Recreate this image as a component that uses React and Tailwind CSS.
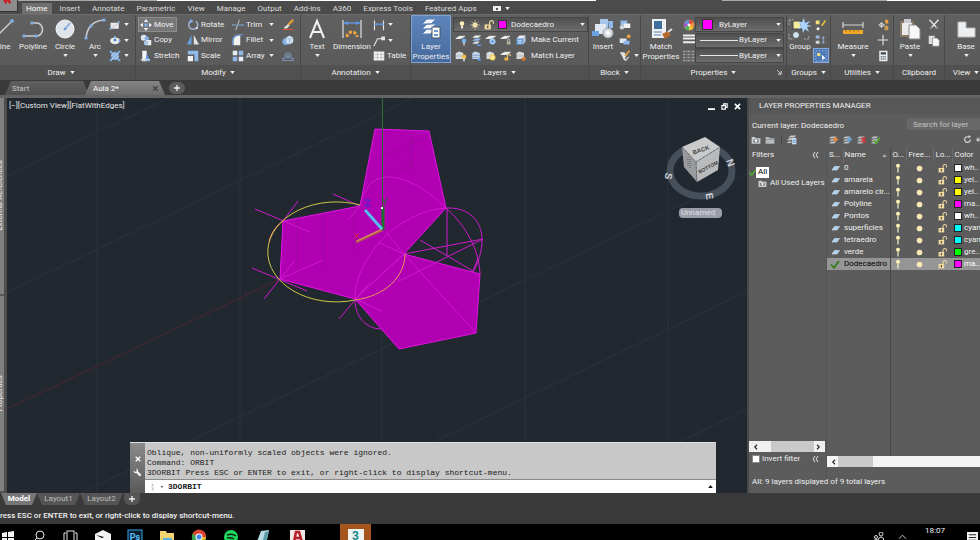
/**
 * App.jsx
 *
 * CAD workspace: ribbon, drawing tabs, 3D viewport with command line,
 * layer manager panel, layout tabs and the desktop taskbar.
 */

// Small icons use a 16x16 box, big ribbon icons a 24x24 box
const small = {
  rect: <><rect x="2" y="5" width="11" height="8" fill="#e8eaec" /><path d="M2 13L13 5" stroke="#b9c3cf" /><circle cx="13" cy="4" r="1.5" fill="#7fb2ea" /><circle cx="2" cy="13" r="1.5" fill="#7fb2ea" /></>,
  ellipse: <><ellipse cx="8" cy="9" rx="6.500" ry="4.500" fill="#e8eaec" /><circle cx="8" cy="8" r="1.800" fill="#3f78c0" /><circle cx="8" cy="4" r="1.500" fill="#7fb2ea" /><circle cx="14" cy="9" r="1.500" fill="#7fb2ea" /></>,
  hatch: <><rect x="3" y="3" width="10" height="10" fill="#86b1e4" /><path d="M3 8L8 3M3 13L13 3M8 13L13 8" stroke="#dbe9f8" /><path d="M1 1h3v3H1zM12 1h3v3h-3zM1 12h3v3H1zM12 12h3v3h-3z" fill="#7ba9df" /></>,
  move: <><path d="M8 0l3 4H5zM8 16l3-4H5zM0 8l4-3v6zM16 8l-4-3v6z" fill="#eef1f4" /><rect x="6" y="6" width="4" height="4" fill="#7fb2ea" /></>,
  copy: <><circle cx="5" cy="5" r="4" fill="#dfe6ee" /><circle cx="9" cy="6" r="3" fill="#86b1e4" /><path d="M8 8h7v7H8z" fill="#e8eaec" /><circle cx="8" cy="12" r="3" fill="#a9c8ea" /></>,
  stretch: <><path d="M3 1h6v14H3z" fill="#f2f4f6" /><path d="M9 5l5 10H7z" fill="#5d9be4" /><path d="M1 13h12" stroke="#cfd8e2" strokeWidth="2" /></>,
  rotate: <><path d="M12 3A6 6 0 1 1 4 3.500" fill="none" stroke="#9fb4cc" strokeWidth="2" /><path d="M4 0l5 3-5 3z" fill="#7fb2ea" /><circle cx="13" cy="12" r="1.500" fill="#dfe6ee" /></>,
  mirror: <><path d="M6 1v13H0z" fill="#6aa3e4" /><path d="M9 1v13h7z" fill="#dfe2e6" /></>,
  scale: <><path d="M1 1h14v14h-5V6H1z" fill="#8fb9ea" /><rect x="1" y="8" width="7" height="7" fill="#f0f2f4" /></>,
  trim: <><path d="M0 8h6M9 8h7" stroke="#7fb2ea" strokeWidth="1.500" /><path d="M10 1L5 15" stroke="#a8b4c2" strokeWidth="1.500" /></>,
  fillet: <><path d="M2 15V9a7 7 0 0 1 7-7h2v13z" fill="#f0f2f4" /><path d="M1 15V9a8 8 0 0 1 8-8h6" fill="none" stroke="#6aa3e4" strokeWidth="1.500" /></>,
  array: <><path d="M1 1h6v6H1zM9 9h6v6H9z" fill="#e8eef6" /><path d="M9 1h6v6H9zM1 9h6v6H1z" fill="#8fb9ea" /></>,
  erase: <><path d="M15 1L8 8" stroke="#e9a13b" strokeWidth="3" /><path d="M8 7l2 2-4 4-4-1z" fill="#e6e6e6" /><path d="M1 14h14" stroke="#d8542c" strokeWidth="1.500" /></>,
  explode: <><circle cx="5" cy="10" r="4.500" fill="#86b1e4" /><path d="M5 5l5-3 5 3v6l-5 3-4-2z" fill="#cfe0f2" /><path d="M5 5l5 2 5-2M10 7v7" stroke="#8fb0d6" fill="none" /></>,
  offset: <><path d="M1 14h14v-3h-3V8a4 4 0 0 0-8 0v3H1z" fill="none" stroke="#7c93b5" strokeWidth="1.500" /><path d="M6 11V8a2 2 0 0 1 4 0v3z" fill="#7c93b5" /></>,
  linear: <><path d="M2 2v13M14 2v13" stroke="#e6e6e6" strokeWidth="1.500" /><path d="M2 7h12" stroke="#5c97e6" strokeWidth="1.500" /><path d="M2 7l4-2v4zM14 7l-4-2v4z" fill="#5c97e6" /></>,
  leader: <><path d="M1 15L6 5h6" fill="none" stroke="#e6e6e6" strokeWidth="1.500" /><rect x="11" y="2" width="5" height="5" fill="#e6e6e6" /></>,
  table: <><rect x="1" y="2" width="14" height="12" fill="#f2f2f2" /><path d="M1 6h14M1 10h14M6 2v12M11 2v12" stroke="#a9b0b8" strokeWidth="0.800" /></>,
  layOff: <><path d="M1 6l5-3h7l-5 3z" fill="#f2f4f6" stroke="#f2f4f6" /><circle cx="12" cy="9" r="3" fill="#79aef0" /><path d="M12 11v4" stroke="#cfd8e2" strokeWidth="2" /></>,
  layIso: <><path d="M3 5l4-3h8l-4 3z" fill="#f2f4f6" /><path d="M3 9l4-3h8l-4 3z" fill="#8fb9ea" /><path d="M3 13l4-3h6l-3 3z" fill="#dfe6ee" /><path d="M9 15h6" stroke="#5c97e6" strokeWidth="2" /></>,
  layFreeze: <><path d="M1 6l5-3h8l-5 3z" fill="#f2f4f6" stroke="#f2f4f6" /><circle cx="10" cy="10" r="4" fill="#a7cdf5" /><path d="M10 8v4M8 10h4" stroke="#4d86cf" /></>,
  layLock: <><path d="M1 6l5-3h7l-5 3z" fill="#f2f4f6" stroke="#f2f4f6" /><rect x="9" y="10" width="5" height="4" fill="#a9b59a" /><path d="M10 10V8a1.500 1.500 0 0 1 3 0v2" fill="none" stroke="#d8d8d8" /></>,
  layMake: <><path d="M2 6h9v8H2z" fill="#6aa3e4" /><path d="M2 6l4-4h8l-3 4z" fill="#e8eef6" /><path d="M11 6l3-4v8l-3 4z" fill="#b9cbe0" /><path d="M4 9h5M4 12h5" stroke="#fff" /></>,
  layOn: <><path d="M1 4l5-2 5 2v8H1z" fill="#d8dbdf" /><path d="M1 8h9" stroke="#a2a9b1" /><circle cx="12" cy="9" r="3" fill="#f4c24a" /><path d="M12 11v4" stroke="#eee" strokeWidth="2" /></>,
  layUniso: <><path d="M3 4l4-2 6 2v8H3z" fill="#c5d6ea" /><path d="M3 7h10M3 10h8" stroke="#7794b8" /><path d="M9 13l5 2v-5z" fill="#5c97e6" /></>,
  layThaw: <><path d="M2 4l4-2 6 2v8H2z" fill="#d8dbdf" /><circle cx="10" cy="10" r="4" fill="#f6cf5e" /><circle cx="10" cy="10" r="2" fill="#fff3bd" /></>,
  layUnlock: <><path d="M1 6l5-3h8l-5 3z" fill="#f2f4f6" stroke="#f2f4f6" /><rect x="6" y="10" width="5" height="4" fill="#f0b63c" /><path d="M10 10V8a2 2 0 0 1 4 0" fill="none" stroke="#f0d27c" strokeWidth="1.500" /></>,
  layMatch: <><path d="M2 4l4-2 6 2v8H2z" fill="#d8dbdf" /><path d="M2 8h9" stroke="#a2a9b1" /><path d="M8 11l5-2 2 3-4 3z" fill="#d67b2f" /></>,
  blkEdit: <><path d="M2 2h9v6H2z" fill="#8fb9ea" /><path d="M6 6h9v6H6z" fill="#f0f2f4" /><circle cx="4" cy="11" r="3" fill="#cfd6de" /></>,
  blkNew: <><path d="M1 6h9v6H1z" fill="#e3e9f0" /><path d="M6 9h8v5H6z" fill="#8fb9ea" /><circle cx="13" cy="3" r="2.500" fill="#f3a13c" /></>,
  blkAttr: <><path d="M1 3h6l3 4-3 7-3-6z" fill="#dfe2e6" /><path d="M14 1L8 8" stroke="#e9a13b" strokeWidth="2.500" /><path d="M6 11l3 3 4-5" stroke="#e6e6e6" fill="none" strokeWidth="1.500" /></>,
  wheel: <><circle cx="8" cy="8" r="7" fill="#e8c93a" /><path d="M8 8V1a7 7 0 0 0-6 3.500z" fill="#5a8ee8" /><path d="M8 8L2 4.500A7 7 0 0 0 2 11.500z" fill="#a056c8" /><path d="M8 8l-6 3.500A7 7 0 0 0 8 15z" fill="#45b567" /><path d="M8 8v7a7 7 0 0 0 6-3.500z" fill="#e8c93a" /><path d="M8 8V1a7 7 0 0 1 6 3.500z" fill="#e24646" /><path d="M8 8l6-3.500a7 7 0 0 1 0 7z" fill="#f09038" /><circle cx="8" cy="8" r="2" fill="#f3f3f3" /></>,
  weight: <path d="M0 2h16M0 6h16M0 11h16" stroke="#eeeeee" strokeWidth="2.500" />,
  ltype: <path d="M0 2h16M0 6h16M0 10h16M0 14h16" stroke="#a5a5a5" strokeWidth="2" strokeDasharray="3 1 1 1" />,
  ungroup: <><rect x="1" y="2" width="5" height="5" fill="#f3e27a" /><circle cx="4" cy="13" r="2" fill="#f2f2f2" /><path d="M14 2L9 9" stroke="#e9c53b" strokeWidth="2" /></>,
  groupEdit: <><rect x="1" y="2" width="5" height="4" fill="#9fbce0" /><rect x="1" y="9" width="5" height="4" fill="#cfd6de" /><path d="M11 3v10M9 5h4M9 11h4" stroke="#9fc0ea" /></>,
  groupSel: <><path d="M1 1h14v14H1z" fill="none" stroke="#a9c4e8" strokeDasharray="2 2" /><rect x="3" y="4" width="4" height="4" fill="#f3e27a" /><path d="M9 6l5 5-3 1-1 3z" fill="#fff" /></>,
  quickCalc: <><path d="M2 8h9M6 4v8" stroke="#e6e6e6" /><circle cx="6" cy="8" r="2.500" fill="none" stroke="#e6e6e6" /><rect x="11" y="1" width="4" height="5" fill="#f3a13c" /><rect x="10" y="9" width="5" height="6" fill="#c99a52" /></>,
  point: <path d="M8 1v14M1 8h14" stroke="#e6e6e6" strokeWidth="1.500" />,
  calc: <><rect x="3" y="1" width="11" height="14" fill="#eceff2" /><rect x="5" y="3" width="7" height="3" fill="#3f4a58" /><path d="M5 9h7M5 12h7" stroke="#5a6470" strokeWidth="2" strokeDasharray="1.500 1" /></>,
  cut: <><path d="M2 1l9 10M14 1L5 11" stroke="#e6e6e6" strokeWidth="1.800" /><circle cx="4" cy="12" r="1.800" fill="#888" /><circle cx="12" cy="12" r="1.800" fill="#888" /></>,
  copyClip: <><path d="M1 1h8v11H1z" fill="#dcdfe2" /><path d="M6 4h6l3 3v8H6z" fill="#f6f6f6" stroke="#777" strokeWidth="0.800" /></>,
  bulb: <><circle cx="8" cy="5" r="4.500" fill="#fdf3b4" /><path d="M6 9h4v6H6z" fill="#f1eecb" /></>,
  pin: <><circle cx="8" cy="4.500" r="3.200" fill="#fdf3b4" /><path d="M7 7h2v8H7z" fill="#f1eecb" /></>,
  sun: <><circle cx="8" cy="8" r="4" fill="#fbeab5" /><path d="M8 0v16M0 8h16M2.500 2.500l11 11M13.500 2.500l-11 11" stroke="#e8d9a8" strokeWidth="0.900" /></>,
  lock: <><rect x="1" y="7" width="10" height="8" fill="#f1d9a0" /><rect x="5" y="9" width="2" height="4" fill="#4a4a4a" /><path d="M9 7V4a3 3 0 0 1 6 0v2" fill="none" stroke="#f1d9a0" strokeWidth="1.800" /></>,
  sheet: <path d="M1 12l5-7h10l-5 7z" fill="#a9d0f5" stroke="#e8f3ff" />,
  check: <path d="M1 8l5 6L15 2" fill="none" stroke="#4fae28" strokeWidth="3" />,
  checkDark: <path d="M1 8l5 6L15 2" fill="none" stroke="#2f7d14" strokeWidth="3" />,
  folderPlus: <><path d="M1 3h5l2 2h7v9H1z" fill="#c9ccd0" /><path d="M4 7h8v5H4z" fill="#6d7176" /><path d="M8 6l1 2h2l-2 2 1 2-2-1-2 1 1-2-2-2h2z" fill="#fff" /></>,
  folder: <><path d="M1 3h5l2 2h7v9H1z" fill="#b7babd" /><path d="M1 7h14" stroke="#808387" /></>,
  states: <><path d="M1 9l4-3h6l-3 3zM3 5l4-3h8l-3 3zM1 13l3-2h4v2z" fill="#c9ccd0" /><rect x="9" y="6" width="6" height="9" fill="#dcebfb" /><path d="M10 9h4M10 12h4" stroke="#3a80d0" strokeWidth="1.500" /></>,
  stack: <path d="M1 6l4-4h9l-4 4zM1 10l4-4h9l-4 4zM1 14l4-4h9l-4 4z" fill="#c2c6ca" stroke="#565656" strokeWidth="0.800" />,
  refresh: <><path d="M13 8A5 5 0 1 1 8 3h3" fill="none" stroke="#d8d8d8" strokeWidth="2" /><path d="M10 0l4 3-4 3z" fill="#d8d8d8" /></>,
  grip: <path d="M2 2h12M2 7h12M2 12h12" stroke="#aaa" strokeWidth="1.500" strokeDasharray="1.500 1.500" />,
  wrench: <path d="M1 5a4 4 0 0 0 5 4l6 6 3-3-6-6A4 4 0 0 0 5 1l2 3-2 3z" fill="#f2f2f2" />,
  prompt: <><circle cx="8" cy="3" r="2.500" fill="#c4c4c4" /><path d="M5 6h6M5 9h6M7 11h3v4H7z" stroke="#c4c4c4" fill="#c4c4c4" /></>,
};

const big = {
  line: <><path d="M4 21L21 4" stroke="#c9ced4" strokeWidth="1.500" /><circle cx="21" cy="4" r="2" fill="#7fa9dd" /><circle cx="4" cy="21" r="2" fill="#7fa9dd" /></>,
  polyline: <><path d="M11 6h5a5.500 6.500 0 0 1 0 13H3" fill="none" stroke="#c9ced4" strokeWidth="1.600" /><circle cx="11" cy="6" r="1.800" fill="#7fa9dd" /><circle cx="3" cy="19" r="1.800" fill="#7fa9dd" /><circle cx="15" cy="19" r="1.800" fill="#7fa9dd" /></>,
  circle: <><circle cx="12" cy="12" r="9" fill="#dfe4ea" stroke="#f6f8fa" /><path d="M12 12l5-6" stroke="#7fa9dd" strokeWidth="1.500" /><circle cx="12" cy="12" r="1.300" fill="#6d9bd8" /></>,
  arc: <><path d="M3 21C4 10 10 4 21 3" fill="none" stroke="#c9ced4" strokeWidth="1.600" /><circle cx="3" cy="21" r="1.800" fill="#7fa9dd" /><circle cx="8" cy="9" r="1.800" fill="#7fa9dd" /><circle cx="21" cy="3" r="1.800" fill="#7fa9dd" /></>,
  text: <path d="M5 21L12 4l7 17M8 15h8" fill="none" stroke="#f2f2f2" strokeWidth="2" />,
  dimension: <><path d="M3 3v18M21 3v18" stroke="#c9ced4" strokeWidth="1.400" /><path d="M4 6h16" stroke="#5c97e6" strokeWidth="1.400" /><path d="M4 6l4-2v4zM20 6l-4-2v4z" fill="#5c97e6" /><path d="M7 20a5 5 0 0 1 10 0" fill="none" stroke="#f0a540" strokeWidth="3" strokeDasharray="3 1.500" /></>,
  layers: <><path d="M3 7l5-5h9l-5 5zM3 12l5-5h9l-5 5zM3 17l5-5h7l-3 5z" fill="#f4f6f8" stroke="#5a7fb4" strokeWidth="1" /><rect x="13" y="10" width="8" height="11" fill="#f8f8f8" stroke="#44556c" /><path d="M15 14h4M15 18h4" stroke="#3d78c4" strokeWidth="1.500" /></>,
  insert: <><path d="M9 2h8v9H9z" fill="#a6c6ea" /><path d="M4 7h11v10H4z" fill="#dfe7f0" /><path d="M1 14h7v5H1z" fill="#6aa3e4" /><path d="M17 4h5v7h-4z" fill="#8fb9ea" /><circle cx="17" cy="16" r="5" fill="#d9dde2" stroke="#9aa3ad" /><circle cx="17" cy="16" r="2" fill="#fff" /></>,
  match: <><path d="M3 2h14v19H3z" fill="#eef1f4" /><rect x="5" y="4" width="8" height="8" fill="#3f6f9f" /><path d="M5 15h8M5 18h7" stroke="#8fa7c0" strokeWidth="1.500" /><path d="M13 17l6-3 3 4-6 4z" fill="#b76a2c" /><path d="M19 15l4-3" stroke="#ddd" strokeWidth="2" /></>,
  group: <><path d="M1 3h5M1 3v5M1 17v5h5M16 22h5v-4" fill="none" stroke="#a7acb2" strokeDasharray="2 1" /><rect x="5" y="4" width="8" height="8" fill="#f3ef9a" stroke="#444" /><circle cx="8" cy="18" r="3.500" fill="#cfe4f0" stroke="#555" /><path d="M16 1l1 5 5-2-3 4 5 1-5 1 2 5-4-3-2 4-1-5-4 1 3-4-3-3 4 0z" fill="#a9d6ff" /></>,
  measure: <><path d="M2 5v6M22 5v6M2 8h20" stroke="#d6d6d6" strokeWidth="1.200" /><rect x="2" y="13" width="20" height="4" fill="#f0a828" /><path d="M5 13v2M9 13v2M13 13v2M17 13v2" stroke="#a77410" /></>,
  paste: <><rect x="2" y="4" width="14" height="16" rx="1" fill="#8a7a68" /><rect x="4" y="6" width="10" height="12" fill="#ececec" /><rect x="6" y="2" width="7" height="4" fill="#c8ccd0" /><path d="M11 8h7l4 4v10H11z" fill="#f8f8f8" stroke="#8a8a8a" /></>,
  base: <path d="M4 5h8v6h9v9H4z" fill="#eceef0" stroke="#b9bcc0" />,
};

const Icon = ({ name, className = "w-3 h-3" }) => (
  <svg viewBox={big[name] ? "0 0 24 24" : "0 0 16 16"} className={`${className} shrink-0`} aria-hidden="true">
    {big[name] || small[name]}
  </svg>
);

const Caret = ({ className = "" }) => (
  <svg viewBox="0 0 6 4" className={`w-[5px] h-[3px] shrink-0 ${className}`} aria-hidden="true">
    <path d="M0 0h6L3 4z" fill="#f2f2f2" />
  </svg>
);

// One ribbon group: tools on top, title strip below
const Panel = ({ title, caret = true, className, corner, children }) => (
  <section className={`flex flex-col shrink-0 border-r border-[#484848] ${className}`}>
    <div className="flex h-[50px]">{children}</div>
    <div className="flex items-center justify-center gap-1 h-[15px] bg-[#515151] relative">
      <span>{title}</span>
      {caret && <Caret />}
      {corner && (
        <svg viewBox="0 0 6 6" className="absolute right-1 w-[5px] h-[5px]"><path d="M0 0l5 5M5 1v4H1" stroke="#e6e6e6" fill="none" /></svg>
      )}
    </div>
  </section>
);

const BigButton = ({ icon, lines, caret, className }) => (
  <button className={`flex flex-col items-center shrink-0 whitespace-nowrap pt-[2px] ${className}`}>
    <Icon name={icon} className="w-6 h-6" />
    <span className="mt-px">{lines[0]}</span>
    {lines[1] && <span>{lines[1]}</span>}
    {caret && <Caret className="mt-[2px]" />}
  </button>
);

const Tool = ({ icon, label, caret, active }) => (
  <button
    aria-label={label || icon}
    className={`flex items-center gap-[2px] h-[15px] px-[2px] whitespace-nowrap ${active ? "bg-[#777777] outline outline-[#8d8d8d] -outline-offset-1" : ""}`}
  >
    <Icon name={icon} />
    {label && <span>{label}</span>}
    {caret && <Caret className="ml-auto" />}
  </button>
);

const Tools = ({ items, className }) => (
  <div className={`flex flex-col justify-between shrink-0 py-[2px] ${className}`}>
    {items.map(item => <Tool key={item.icon} {...item} />)}
  </div>
);

const LAYER_TOOLS = [
  { label: "Make Current", icons: ["layOff", "layIso", "layFreeze", "layLock", "layMake"] },
  { label: "Match Layer", icons: ["layOn", "layUniso", "layThaw", "layUnlock", "layMatch"] },
];

const Ribbon = () => (
  <div className="flex bg-linear-to-b from-[#606060] to-[#595959] border-t border-[#6b6b6b] overflow-hidden">
    <Panel title="Draw" className="w-[149px] -ml-[13px]">
      <BigButton icon="line" lines={["Line"]} className="w-8" />
      <BigButton icon="polyline" lines={["Polyline"]} className="w-7" />
      <BigButton icon="circle" lines={["Circle"]} caret className="w-9" />
      <BigButton icon="arc" lines={["Arc"]} caret className="w-6" />
      <Tools className="w-6" items={[
        { icon: "rect", caret: true }, { icon: "ellipse", caret: true }, { icon: "hatch", caret: true },
      ]} />
    </Panel>

    <Panel title="Modify" className="w-[165px]">
      <Tools className="w-[39px] ml-[2px] mr-2" items={[
        { icon: "move", label: "Move", active: true }, { icon: "copy", label: "Copy" }, { icon: "stretch", label: "Stretch" },
      ]} />
      <Tools className="w-[45px]" items={[
        { icon: "rotate", label: "Rotate" }, { icon: "mirror", label: "Mirror" }, { icon: "scale", label: "Scale" },
      ]} />
      <Tools className="w-[46px] mr-1" items={[
        { icon: "trim", label: "Trim", caret: true }, { icon: "fillet", label: "Fillet", caret: true }, { icon: "array", label: "Array", caret: true },
      ]} />
      <Tools className="w-4" items={[{ icon: "erase" }, { icon: "explode" }, { icon: "offset" }]} />
    </Panel>

    <Panel title="Annotation" className="w-[110px]">
      <BigButton icon="text" lines={["Text"]} caret className="w-8" />
      <BigButton icon="dimension" lines={["Dimension"]} className="w-[38px]" />
      <div className="flex flex-col justify-between py-[2px]">
        <div className="flex flex-col w-6 gap-px"><Tool icon="linear" caret /><Tool icon="leader" caret /></div>
        <Tool icon="table" label="Table" />
      </div>
    </Panel>

    <Panel title="Layers" className="w-[178px]">
      <BigButton icon="layers" lines={["Layer", "Properties"]} className="w-10 mr-[2px] mb-[2px] bg-linear-to-b from-[#5e86bd] to-[#46699c] outline outline-[#7fa3d3] -outline-offset-1" />
      <div className="flex flex-col justify-between w-[135px] py-[2px]">
        <label className="flex items-center gap-1 h-[15px] pl-1 pr-[2px] bg-linear-to-b from-[#505050] to-[#6c6c6c] border border-[#464646]">
          <Icon name="bulb" className="w-2 h-[10px]" />
          <Icon name="sun" className="w-[10px] h-[10px]" />
          <Icon name="lock" className="w-[10px] h-[10px]" />
          <span className="w-[9px] h-[9px] bg-[#ff00ff] border border-[#333]" />
          <select aria-label="Current layer" className="appearance-none flex-1 outline-none">
            <option>Dodecaedro</option>
          </select>
          <Caret />
        </label>
        {LAYER_TOOLS.map(row => (
          <div key={row.label} className="flex items-center h-[15px]">
            {row.icons.map(icon => (
              <button key={icon} aria-label={icon} className="flex justify-center w-[15px]"><Icon name={icon} /></button>
            ))}
            <button className="pl-[3px] whitespace-nowrap">{row.label}</button>
          </div>
        ))}
      </div>
    </Panel>

    <Panel title="Block" className="w-[52px]">
      <BigButton icon="insert" lines={["Insert"]} className="w-7" />
      <Tools className="w-6" items={[{ icon: "blkEdit" }, { icon: "blkNew" }, { icon: "blkAttr", caret: true }]} />
    </Panel>

    <Panel title="Properties" corner className="w-[146px]">
      <BigButton icon="match" lines={["Match", "Properties"]} className="w-[40px]" />
      <Tools className="w-[14px]" items={[{ icon: "wheel" }, { icon: "weight" }, { icon: "ltype" }]} />
      <div className="flex flex-col justify-between w-[89px] py-[2px]">
        {["color", "lineweight", "linetype"].map(kind => (
          <label key={kind} className="flex items-center h-[15px] px-[2px] gap-1 bg-linear-to-b from-[#505050] to-[#6c6c6c] border border-[#464646]">
            {kind === "color"
              ? <span className="w-[11px] h-[11px] ml-1 mr-[2px] bg-[#ff00ff] border border-[#333]" />
              : <span className="w-[38px] h-px ml-[2px] -mr-[3px] bg-[#e6e6e6]" />}
            <select aria-label={kind} className="appearance-none flex-1 min-w-0 outline-none">
              <option>ByLayer</option>
            </select>
            <Caret />
          </label>
        ))}
      </div>
    </Panel>

    <Panel title="Groups" className="w-[44px]">
      <BigButton icon="group" lines={["Group"]} className="w-[26px]" />
      <div className="flex flex-col justify-between py-[2px]">
        <Tool icon="ungroup" />
        <Tool icon="groupEdit" />
        <div className="bg-[#4f79b5] outline outline-[#85a9dc] -outline-offset-1"><Tool icon="groupSel" /></div>
      </div>
    </Panel>

    <Panel title="Utilities" className="w-[63px]">
      <BigButton icon="measure" lines={["Measure"]} caret className="w-11" />
      <Tools className="w-4" items={[{ icon: "quickCalc" }, { icon: "point" }, { icon: "calc" }]} />
    </Panel>

    <Panel title="Clipboard" caret={false} className="w-[51px]">
      <BigButton icon="paste" lines={["Paste"]} caret className="w-8" />
      <div className="flex flex-col gap-px py-[2px]"><Tool icon="cut" /><Tool icon="copyClip" /></div>
    </Panel>

    <Panel title="View" className="flex-1">
      <BigButton icon="base" lines={["Base"]} caret className="w-[42px]" />
    </Panel>
  </div>
);

const MENU = ["Home", "Insert", "Annotate", "Parametric", "View", "Manage", "Output", "Add-ins", "A360", "Express Tools", "Featured Apps"];

const Header = () => (
  <header>
    <div className="flex bg-[#4b4b4b]">
      <button aria-label="Application menu" className="w-[18px] h-[12px] bg-[#8c8c8c] border-r border-b border-[#333] overflow-hidden">
        <svg viewBox="0 0 18 12" className="w-full h-full"><path d="M3 0l3 5 2-4 2 4 2-3-2-2z" fill="#c9232b" /></svg>
      </button>
      <div className="flex-1 flex flex-col">
        <div className="flex h-px">
          <div className="w-[139px] bg-[#a9a9a9]" />
          <div className="w-[439px] bg-white" />
          <div className="w-[126px] bg-[#4b4b4b]" />
          <div className="w-[165px] bg-[#a9a9a9]" />
          <div className="flex-1 bg-white" />
        </div>
        <nav className="flex items-end h-[13px] pl-1">
          {MENU.map(tab => (
            <button
              key={tab}
              className={tab === "Home" ? "px-1 mr-[2px] h-[11px] bg-[#707070] text-white" : "px-[6px] h-[11px] text-[#dcdcdc]"}
            >
              {tab}
            </button>
          ))}
          <button aria-label="Ribbon display" className="flex items-center gap-1 h-[11px] ml-[10px]">
            <span className="flex items-center justify-center w-2 h-[5px] bg-[#eee]"><span className="w-[2px] h-[2px] bg-[#555]" /></span>
            <Caret />
          </button>
        </nav>
      </div>
    </div>
    <Ribbon />
    <div className="flex items-end h-[15px] pl-[5px] bg-[#3a3a3a]">
      <button className="w-[84px] h-[14px] pt-px pl-[7px] text-left text-[#c8c8c8] bg-linear-to-b from-[#606060] to-[#505050] [clip-path:polygon(6px_0,calc(100%-6px)_0,100%_100%,0_100%)]">Start</button>
      <button className="flex items-center justify-between w-[80px] h-[14px] -ml-1 pt-px pl-2 pr-[7px] text-white bg-linear-to-b from-[#858585] to-[#6b6b6b] [clip-path:polygon(6px_0,calc(100%-6px)_0,100%_100%,0_100%)]">
        Aula 2*
        <svg viewBox="0 0 6 6" className="w-[5px] h-[5px]"><path d="M0 0l6 6M6 0L0 6" stroke="#444" strokeWidth="1.500" /></svg>
      </button>
      <button aria-label="New drawing" className="flex items-center justify-center w-4 h-3 ml-1 mb-px rounded-md bg-[#5c5c5c]">
        <svg viewBox="0 0 6 6" className="w-[6px] h-[6px]"><path d="M3 0v6M0 3h6" stroke="#eee" strokeWidth="1.300" /></svg>
      </button>
    </div>
    <div className="h-[3px] bg-[#646464]" />
  </header>
);

// Grid lines of the drawing plane; the X axis is drawn apart in red
const PLANE_LINES = [-290, -172, -54, 64, 181, 417, 535, 653, 771];
const MAJOR_X = [97, 240, 382, 525, 668];
const MINOR_X = [11, 39, 68, 125, 154, 182, 211, 268, 297, 325, 354, 411, 439, 468, 497, 554, 582, 611, 639, 697, 725];

const Model = () => (
  <svg viewBox="7 98 740 395" preserveAspectRatio="xMidYMid slice" className="absolute inset-0 w-full h-full">
    <g stroke="#242b33">
      {MINOR_X.map(x => <path key={x} d={`M${x} 98V493`} />)}
    </g>
    <g stroke="#2b333d">
      {MAJOR_X.map(x => <path key={x} d={`M${x} 98V493`} />)}
      {PLANE_LINES.map(y => <path key={y} d={`M0 ${y + 115}L750 ${y - 245}`} />)}
    </g>
    <path d="M7 409L280 279" stroke="#4d2630" />

    {/* Three pentagon faces */}
    <g fill="#b000b2" stroke="#e312e3">
      <path d="M375 129L429 131L446 208L404 254L360 206Z" />
      <path d="M360 206L283 221L280 279L355 299L404 254Z" stroke="none" />
      <path d="M360 206L283 221L280 279L355 299" />
      <path d="M404 254L480 274L476 333L399 349L355 299Z" />
    </g>
    <path d="M360 206L404 254" stroke="#b000b2" strokeWidth="2" />
    <g stroke="#92108f" strokeWidth="0.600">
      <path d="M411 131v40M297 220v50M323 214v54M354 208v42M375 160l54-24M370 185l43-20" />
    </g>
    <g fill="none" stroke="#cf18cf">
      <path d="M360 206C364 188 372 178 387 177C410 177 430 193 446 208" />
      <path d="M355 299C354 275 372 247 390 232C408 217 428 209 446 208C468 207 482 220 482 240C482 252 478 264 473 272" />
      <path d="M446 208C462 222 479 246 480 274M355 299C355 316 365 329 382 329" />
      <path d="M447 208V255M404 254L483 239L397 282M420 240L473 271L478 258M404 254L476 333M355 299L404 254" />
      <path d="M378 242L404 254L386 232M280 279L323 260M360 206l-12 14" />
      <path d="M255 209L310 232M298 201L283 221M333 194L360 206M252 268L307 291M295 260L264 299M370 282L339 319M355 299L382 311" />
    </g>
    <path d="M360 205A68.500 50 0 1 0 355 300" fill="none" stroke="#c9c64a" />
    <path d="M355 300C385 296 405 277 405 254M269 242C271 233 276 226 283 221" fill="none" stroke="#f09a60" />

    {/* UCS icon */}
    <path d="M382.500 98V207" stroke="#2f6a38" />
    <path d="M382 230L356 242" stroke="#b85a50" strokeWidth="3" />
    <path d="M382 229L357 241" stroke="#d89a6c" />
    <path d="M383 230V207" stroke="#1f7328" strokeWidth="3" />
    <rect x="381" y="207" width="2" height="2" fill="#f0fff0" />
    <path d="M382 229L365 210" stroke="#4db8ec" strokeWidth="3" />
    <path d="M382 229L365 210" stroke="#b9ecff" strokeDasharray="1 2" />
    <path d="M364 200h6l-5 6h6" stroke="#3030d8" fill="none" />
    <path d="M382 198l3 4l3-4M385 202v4" stroke="#2c6a33" fill="none" />
    <path d="M354 233l5 6M359 233l-5 6" stroke="#d02848" fill="none" />

    {/* View cube and compass ring */}
    <ellipse cx="701" cy="171" rx="31" ry="25" fill="none" stroke="#464f5a" strokeWidth="7" />
    <path d="M682 147L705 137L720 147L696 162Z" fill="#c9cacc" />
    <path d="M682 147L696 162L697 182L684 167Z" fill="#9a9b9f" />
    <path d="M696 162L720 147L718 170L697 182Z" fill="#b9babc" />
    <path d="M682 147L696 162L720 147M696 162L697 182" fill="none" stroke="#6c6e72" strokeDasharray="3 1" />
    <path d="M688 157v10M690 159v10" stroke="#5a5c60" strokeDasharray="1 1" />
    <g fontFamily="Liberation Sans, sans-serif" fontWeight="700" textAnchor="middle">
      <text x="701" y="152" fontSize="6" fill="#3c3e42" transform="rotate(-20 701 150)">BACK</text>
      <text x="708" y="169" fontSize="5" fill="#3c3e42" transform="rotate(-28 708 167)">BOTTOM</text>
      <text x="668" y="179" fontSize="10" fill="#cfd2d6" transform="rotate(100 668 176)">S</text>
      <text x="730" y="166" fontSize="10" fill="#cfd2d6" transform="rotate(70 730 163)">N</text>
      <text x="710" y="200" fontSize="10" fill="#cfd2d6" transform="rotate(80 710 196)">E</text>
    </g>
  </svg>
);

const CommandLine = () => (
  <div className="flex h-[51px] ml-[123px] mr-[31px] bg-[#c8c8c8] border-t border-[#e0e0e0]">
    <div className="flex flex-col items-center gap-[6px] w-[15px] pt-px bg-linear-to-b from-[#8a8a8a] to-[#5a5a5a]">
      <Icon name="grip" className="w-3 h-[6px]" />
      <svg viewBox="0 0 8 8" className="w-[6px] h-[6px]"><path d="M1 1l6 6M7 1L1 7" stroke="#fff" strokeWidth="1.800" /></svg>
      <Icon name="wrench" className="w-[9px] h-[9px]" />
    </div>
    <div className="flex-1 flex flex-col text-[#1a1a1a] font-['Liberation_Mono',monospace]">
      <div className="flex-1 pt-[5px] pl-[2px] leading-[10px] whitespace-nowrap overflow-hidden">
        <p>Oblique, non-uniformly scaled objects were ignored.</p>
        <p>Command: ORBIT</p>
        <p>3DORBIT Press ESC or ENTER to exit, or right-click to display shortcut-menu.</p>
      </div>
      <label className="flex items-center gap-1 h-[14px] pl-1 pr-[3px] bg-white border-t border-[#8a8a8a]">
        <Icon name="prompt" className="w-[7px] h-[10px]" />
        <svg viewBox="0 0 6 4" className="w-1 h-[2px]"><path d="M0 0h6L3 4z" fill="#666" /></svg>
        <input aria-label="Command" defaultValue="3DORBIT" className="flex-1 font-bold outline-none" />
        <svg viewBox="0 0 6 4" className="w-[5px] h-[3px]"><path d="M0 4h6L3 0z" fill="#111" /></svg>
      </label>
    </div>
  </div>
);

const Viewport = () => (
  <main className="relative flex-1 flex flex-col bg-[#212830] overflow-hidden">
    <Model />
    <div className="relative flex justify-between pt-[3px] pl-[2px] pr-[6px] text-[#e6e6e6]">
      <span>[−][Custom View][FlatWithEdges]</span>
      <div className="flex items-center gap-[6px]">
        <button aria-label="Minimize"><svg viewBox="0 0 8 8" className="w-[7px] h-[7px]"><path d="M0 7h8" stroke="#fff" strokeWidth="2" /></svg></button>
        <button aria-label="Restore"><svg viewBox="0 0 8 8" className="w-[7px] h-[7px]"><path d="M1 3h4v4H1zM3 3V1h4v4H5" fill="none" stroke="#fff" strokeWidth="1.300" /></svg></button>
        <button aria-label="Close"><svg viewBox="0 0 8 8" className="w-[7px] h-[7px]"><path d="M1 1l6 6M7 1L1 7" stroke="#fff" strokeWidth="1.800" /></svg></button>
      </div>
    </div>
    <button className="absolute right-[25px] top-[110px] w-[43px] h-[10px] px-[2px] rounded-sm bg-[#9b9da9] text-left text-[#dfe0e6]">
      Unnamed
    </button>
    <div className="relative mt-auto"><CommandLine /></div>
  </main>
);

const LAYERS = [
  { name: "0", color: "#ffffff", label: "wh.." },
  { name: "amarela", color: "#ffff00", label: "yel.." },
  { name: "amarelo cir...", color: "#ffff00", label: "yel.." },
  { name: "Polyline", color: "#ff00ff", label: "ma.." },
  { name: "Pontos", color: "#ffffff", label: "wh.." },
  { name: "superficies", color: "#00ffff", label: "cyan" },
  { name: "tetraedro", color: "#00ffff", label: "cyan" },
  { name: "verde", color: "#00ff00", label: "gre.." },
  { name: "Dodecaedro", color: "#ff00ff", label: "ma..", current: true },
];

const LayerTable = () => (
  <table className="w-full table-fixed border-collapse whitespace-nowrap">
    <thead>
      <tr className="h-[14px] bg-[#5b5b5b] text-left">
        <th className="w-4 pl-[2px] font-normal">S...</th>
        <th className="w-[47px] pl-px font-normal border-l border-[#6c6c6c]">
          <span className="flex items-center justify-between pr-[3px]">Name
            <svg viewBox="0 0 6 4" className="w-[5px] h-[3px]"><path d="M0 4h6L3 0z" fill="#aaa" /></svg>
          </span>
        </th>
        <th className="w-4 pl-[2px] font-normal border-l border-[#484848]">O...</th>
        <th className="w-[27px] pl-[2px] font-normal border-l border-[#6c6c6c]">Free...</th>
        <th className="w-[19px] pl-[2px] font-normal border-l border-[#6c6c6c]">Lo...</th>
        <th className="pl-[2px] font-normal border-l border-[#6c6c6c]">Color</th>
      </tr>
    </thead>
    <tbody>
      {LAYERS.map(layer => (
        <tr key={layer.name} className={layer.current ? "h-3 bg-[#959595] text-black" : "h-3"}>
          <td><Icon name={layer.current ? "checkDark" : "sheet"} className={layer.current ? "w-[10px] h-[9px] mx-auto" : "w-[9px] h-[8px] mx-auto"} /></td>
          <td className="pl-px">{layer.name}</td>
          <td className="border-l border-[#484848]"><Icon name="pin" className="w-[10px] h-[10px] mx-auto" /></td>
          <td><svg viewBox="0 0 16 16" className="w-[9px] h-[9px] mx-auto"><circle cx="8" cy="8" r="5" fill="#fce9b8" /></svg></td>
          <td><Icon name="lock" className="w-[9px] h-[9px] mx-auto" /></td>
          <td>
            <span className={layer.current ? "flex items-center gap-[2px] pl-[2px] text-white" : "flex items-center gap-[2px] pl-[2px]"}>
              <span className="w-2 h-2 shrink-0 border border-[#222]" style={{ backgroundColor: layer.color }} />
              {layer.label}
            </span>
          </td>
        </tr>
      ))}
    </tbody>
  </table>
);

const Chevron = ({ flip }) => (
  <svg viewBox="0 0 6 8" className="w-[5px] h-[6px] shrink-0"><path d={flip ? "M1 1l3 3-3 3" : "M5 1L2 4l3 3"} fill="none" stroke="#222" strokeWidth="1.500" /></svg>
);

const DoubleChevron = () => (
  <svg viewBox="0 0 7 6" className="w-[7px] h-[6px] mr-[2px] shrink-0"><path d="M3 0L1 3l2 3M6 0L4 3l2 3" fill="none" stroke="#e6e6e6" /></svg>
);

const LayerManager = () => (
  <aside className="flex flex-col shrink-0 w-[233px] bg-[#5c5c5c] border-l-2 border-[#4a4a4a] overflow-hidden">
    <h2 className="pl-[10px] py-[3px] bg-[#575757] whitespace-nowrap">LAYER PROPERTIES MANAGER</h2>
    <div className="flex justify-between pt-[6px] pl-[3px] whitespace-nowrap">
      <span className="pt-px">Current layer: Dodecaedro</span>
      <input aria-label="Search for layer" placeholder="Search for layer" className="w-[73px] h-3 -mt-[2px] pl-[6px] bg-[#686868] placeholder:text-[#c4c4c4] outline-none" />
    </div>
    <div className="flex items-center gap-1 h-[17px] pl-[2px]">
      <Icon name="folderPlus" className="w-[10px] h-[10px]" />
      <Icon name="folder" className="w-[10px] h-[10px]" />
      <div className="w-px h-[10px] ml-[2px] bg-[#444]" />
      <Icon name="states" className="w-[11px] h-[11px]" />
      <div className="flex gap-1 ml-[27px]">
        {["#f0883a", "#6aa3e4", "#e03434", "#4fae28"].map(color => (
          <button key={color} aria-label="Layer action" className="flex">
            <svg viewBox="0 0 16 16" className="w-[10px] h-[10px]">
              {small.stack}
              <path d={color === "#4fae28" ? "M6 9l4 4 6-9" : color === "#e03434" ? "M9 4l6 8M15 4l-6 8" : "M12 3v8M8 7h8"} stroke={color} strokeWidth="2.500" fill="none" />
            </svg>
          </button>
        ))}
      </div>
      <div className="flex gap-1 ml-auto">
        <Icon name="refresh" className="w-[9px] h-[9px]" />
        <Icon name="calc" className="w-[4px] h-[9px]" />
      </div>
    </div>

    <div className="flex flex-1 min-h-0">
      <div className="flex flex-col w-[76px] mr-px pb-[13px]">
        <div className="flex items-center justify-between h-[14px] pl-[3px] pr-1">
          <span>Filters</span><DoubleChevron />
        </div>
        <div className="flex items-center h-3 mt-1">
          <Icon name="check" className="w-[7px] h-[9px]" />
          <button className="h-[11px] px-[2px] bg-white text-black">All</button>
        </div>
        <button className="flex items-center gap-[3px] h-[10px] pl-[9px] whitespace-nowrap"><Icon name="folderPlus" className="w-[9px] h-[9px]" />All Used Layers</button>
        <div className="flex items-center h-[11px] mt-auto px-1 bg-[#f0f0f0]">
          <Chevron />
          <div className="flex-1 mx-[2px] pl-[11px] h-full"><div className="h-full bg-[#c9c9c9]" /></div>
          <Chevron flip />
        </div>
        <div className="flex items-center justify-between pt-[2px] pl-[3px] pr-1">
          <label className="flex items-center gap-[2px] whitespace-nowrap">
            <input type="checkbox" className="appearance-none w-2 h-2 bg-white border border-[#888]" />
            Invert filter
          </label>
          <DoubleChevron />
        </div>
      </div>
      <div className="flex-1 flex flex-col min-w-0 border-l border-[#555] pb-[10px]">
        <LayerTable />
        <div className="flex-1 flex"><div className="w-16 border-r border-[#4a4a4a]" /></div>
        <div className="flex items-center h-[11px] pl-1 bg-[#f4f4f4]">
          <Chevron />
          <div className="w-[35px] h-full ml-[2px] bg-[#c9c9c9]" />
        </div>
      </div>
    </div>
    <p className="pl-[3px] pb-[6px]">All: 9 layers displayed of 9 total layers</p>
  </aside>
);

// Docked palettes collapsed against the left edge
const SideStrip = () => (
  <div className="flex w-[7px] shrink-0 bg-[#4d4d4d]">
    <div className="flex flex-col w-1 overflow-hidden bg-[#808080]">
      {["External References", "Properties"].map(label => (
        <button key={label} className="flex-1 flex items-center justify-end border-b-2 border-[#555]">
          <span className="[writing-mode:vertical-rl] rotate-180 whitespace-nowrap leading-[8px]">{label}</span>
        </button>
      ))}
    </div>
  </div>
);

const TASKS = [
  { name: "Search", art: <><circle cx="9" cy="5" r="4" fill="none" stroke="#e6e6e6" /><path d="M6 8l-5 5" stroke="#e6e6e6" /></> },
  { name: "Task view", art: <><rect x="4" y="1" width="7" height="12" fill="none" stroke="#e6e6e6" /><path d="M3 3H1v8h2M12 3h2v8h-2" fill="none" stroke="#e6e6e6" /></> },
  { name: "Mail", art: <path d="M0 4l8-4 8 4v10H0zM1 5l6 3 2-1z" fill="#f4f4f4" fillRule="evenodd" /> },
  { name: "Photoshop", art: <><rect x="1" y="0" width="14" height="14" fill="#0a1d2d" stroke="#36a9e8" /><text x="8" y="10" fontSize="9" textAnchor="middle" fill="#5cc0ff" fontWeight="700">Ps</text></> },
  { name: "Explorer", art: <><path d="M1 1h6l1 2h7v12H1z" fill="#f3d470" /><path d="M4 8h9v6H4z" fill="#5cb0e0" /></> },
  { name: "Chrome", art: <><circle cx="8" cy="7" r="7" fill="#e5b91f" /><path d="M1.500 4A7 7 0 0 1 15 7H8z" fill="#dc4335" /><path d="M1.500 4A7 7 0 0 0 8 14l2-6z" fill="#34a350" /><circle cx="8" cy="7" r="3.500" fill="#fff" /><circle cx="8" cy="7" r="2.500" fill="#4284f0" /></> },
  { name: "Spotify", art: <><circle cx="8" cy="7" r="7" fill="#20d760" /><path d="M4 5q5-2 9 1M4 8q4-1 7 1M5 11q3-1 5 0" fill="none" stroke="#0b2814" strokeWidth="1.500" /></> },
  { name: "Notepad", art: <><path d="M6 1l8-1-3 14H1z" fill="#b6dbe2" /><path d="M10 2l4-1-3 13H7z" fill="#5e9eac" /></> },
  { name: "AutoCAD", art: <><rect x="3" y="0" width="15" height="15" fill="#f2e6e6" /><path d="M7 12L9 2h3l3 10M8 8h6" stroke="#b3202c" strokeWidth="2.500" fill="none" /></> },
];

const Taskbar = () => (
  <footer className="flex h-4 bg-black overflow-hidden">
    <button aria-label="Start" className="w-[23px] pt-[7px] pl-[2px]">
      <svg viewBox="0 0 12 12" className="w-3 h-3"><path d="M0 2l5-1v5H0zM6 1l6-1v6H6zM0 7h5v5H0zM6 7h6v5H6z" fill="#f4f4f4" /></svg>
    </button>
    {TASKS.map(task => (
      <button key={task.name} aria-label={task.name} className="flex justify-center w-8 pt-[6px] shrink-0">
        <svg viewBox="0 0 16 16" className="w-4 h-4 overflow-visible">{task.art}</svg>
      </button>
    ))}
    <button aria-label="3ds Max" className="flex justify-center w-[31px] ml-[29px] pt-[5px] bg-[#a4561c]">
      <span className="w-4 h-4 text-center text-[12px] leading-[14px] font-bold text-[#128a8c] bg-[#eef4f2]">3</span>
    </button>
    <div className="flex ml-auto gap-[14px] pr-[2px]">
      <svg viewBox="0 0 10 10" className="w-[10px] h-[10px] mt-2"><circle cx="7" cy="2" r="2" fill="none" stroke="#ddd" /><path d="M4 9q0-4 3-4t3 4M0 10q0-3 2-3t2 3" fill="none" stroke="#ddd" /><circle cx="2" cy="5" r="1.500" fill="none" stroke="#ddd" /></svg>
      <svg viewBox="0 0 10 6" className="w-[9px] h-[6px] mt-[10px]"><path d="M1 5l4-4 4 4" fill="none" stroke="#ddd" /></svg>
      <time className="mt-[2px] ml-1">18:07</time>
      <svg viewBox="0 0 12 12" className="w-[11px] h-[11px] mt-2 ml-2"><path d="M0 0h12v12H0z" fill="#f4f4f4" /><path d="M2 3h8M2 6h8M2 9h8" stroke="#111" /></svg>
    </div>
  </footer>
);

export default function App() {
  return (
    <div className="flex flex-col h-screen overflow-hidden bg-[#3a3a3a] text-[#f0f0f0] text-[8px] leading-[10px] font-['Roboto',sans-serif]">
      <Header />
      <div className="flex flex-1 min-h-0">
        <SideStrip />
        <Viewport />
        <LayerManager />
      </div>
      <div className="flex items-start h-[13px] pl-[1px] text-[#bdbdbd]">
        <button className="w-9 h-3 font-bold text-white bg-[#767676] [clip-path:polygon(0_0,100%_0,calc(100%-5px)_100%,5px_100%)]">Model</button>
        {["Layout1", "Layout2"].map(tab => (
          <button key={tab} className="w-[43px] h-3 bg-[#555555] [clip-path:polygon(0_0,100%_0,calc(100%-5px)_100%,5px_100%)]">{tab}</button>
        ))}
        <button aria-label="New layout" className="flex items-center justify-center w-4 h-3 ml-px rounded-b-md bg-[#555555]">
          <svg viewBox="0 0 6 6" className="w-[6px] h-[6px]"><path d="M3 0v6M0 3h6" stroke="#eee" strokeWidth="1.300" /></svg>
        </button>
      </div>
      <p className="h-[18px] pt-[5px] font-medium whitespace-nowrap">ress ESC or ENTER to exit, or right-click to display shortcut-menu.</p>
      <Taskbar />
    </div>
  );
}
